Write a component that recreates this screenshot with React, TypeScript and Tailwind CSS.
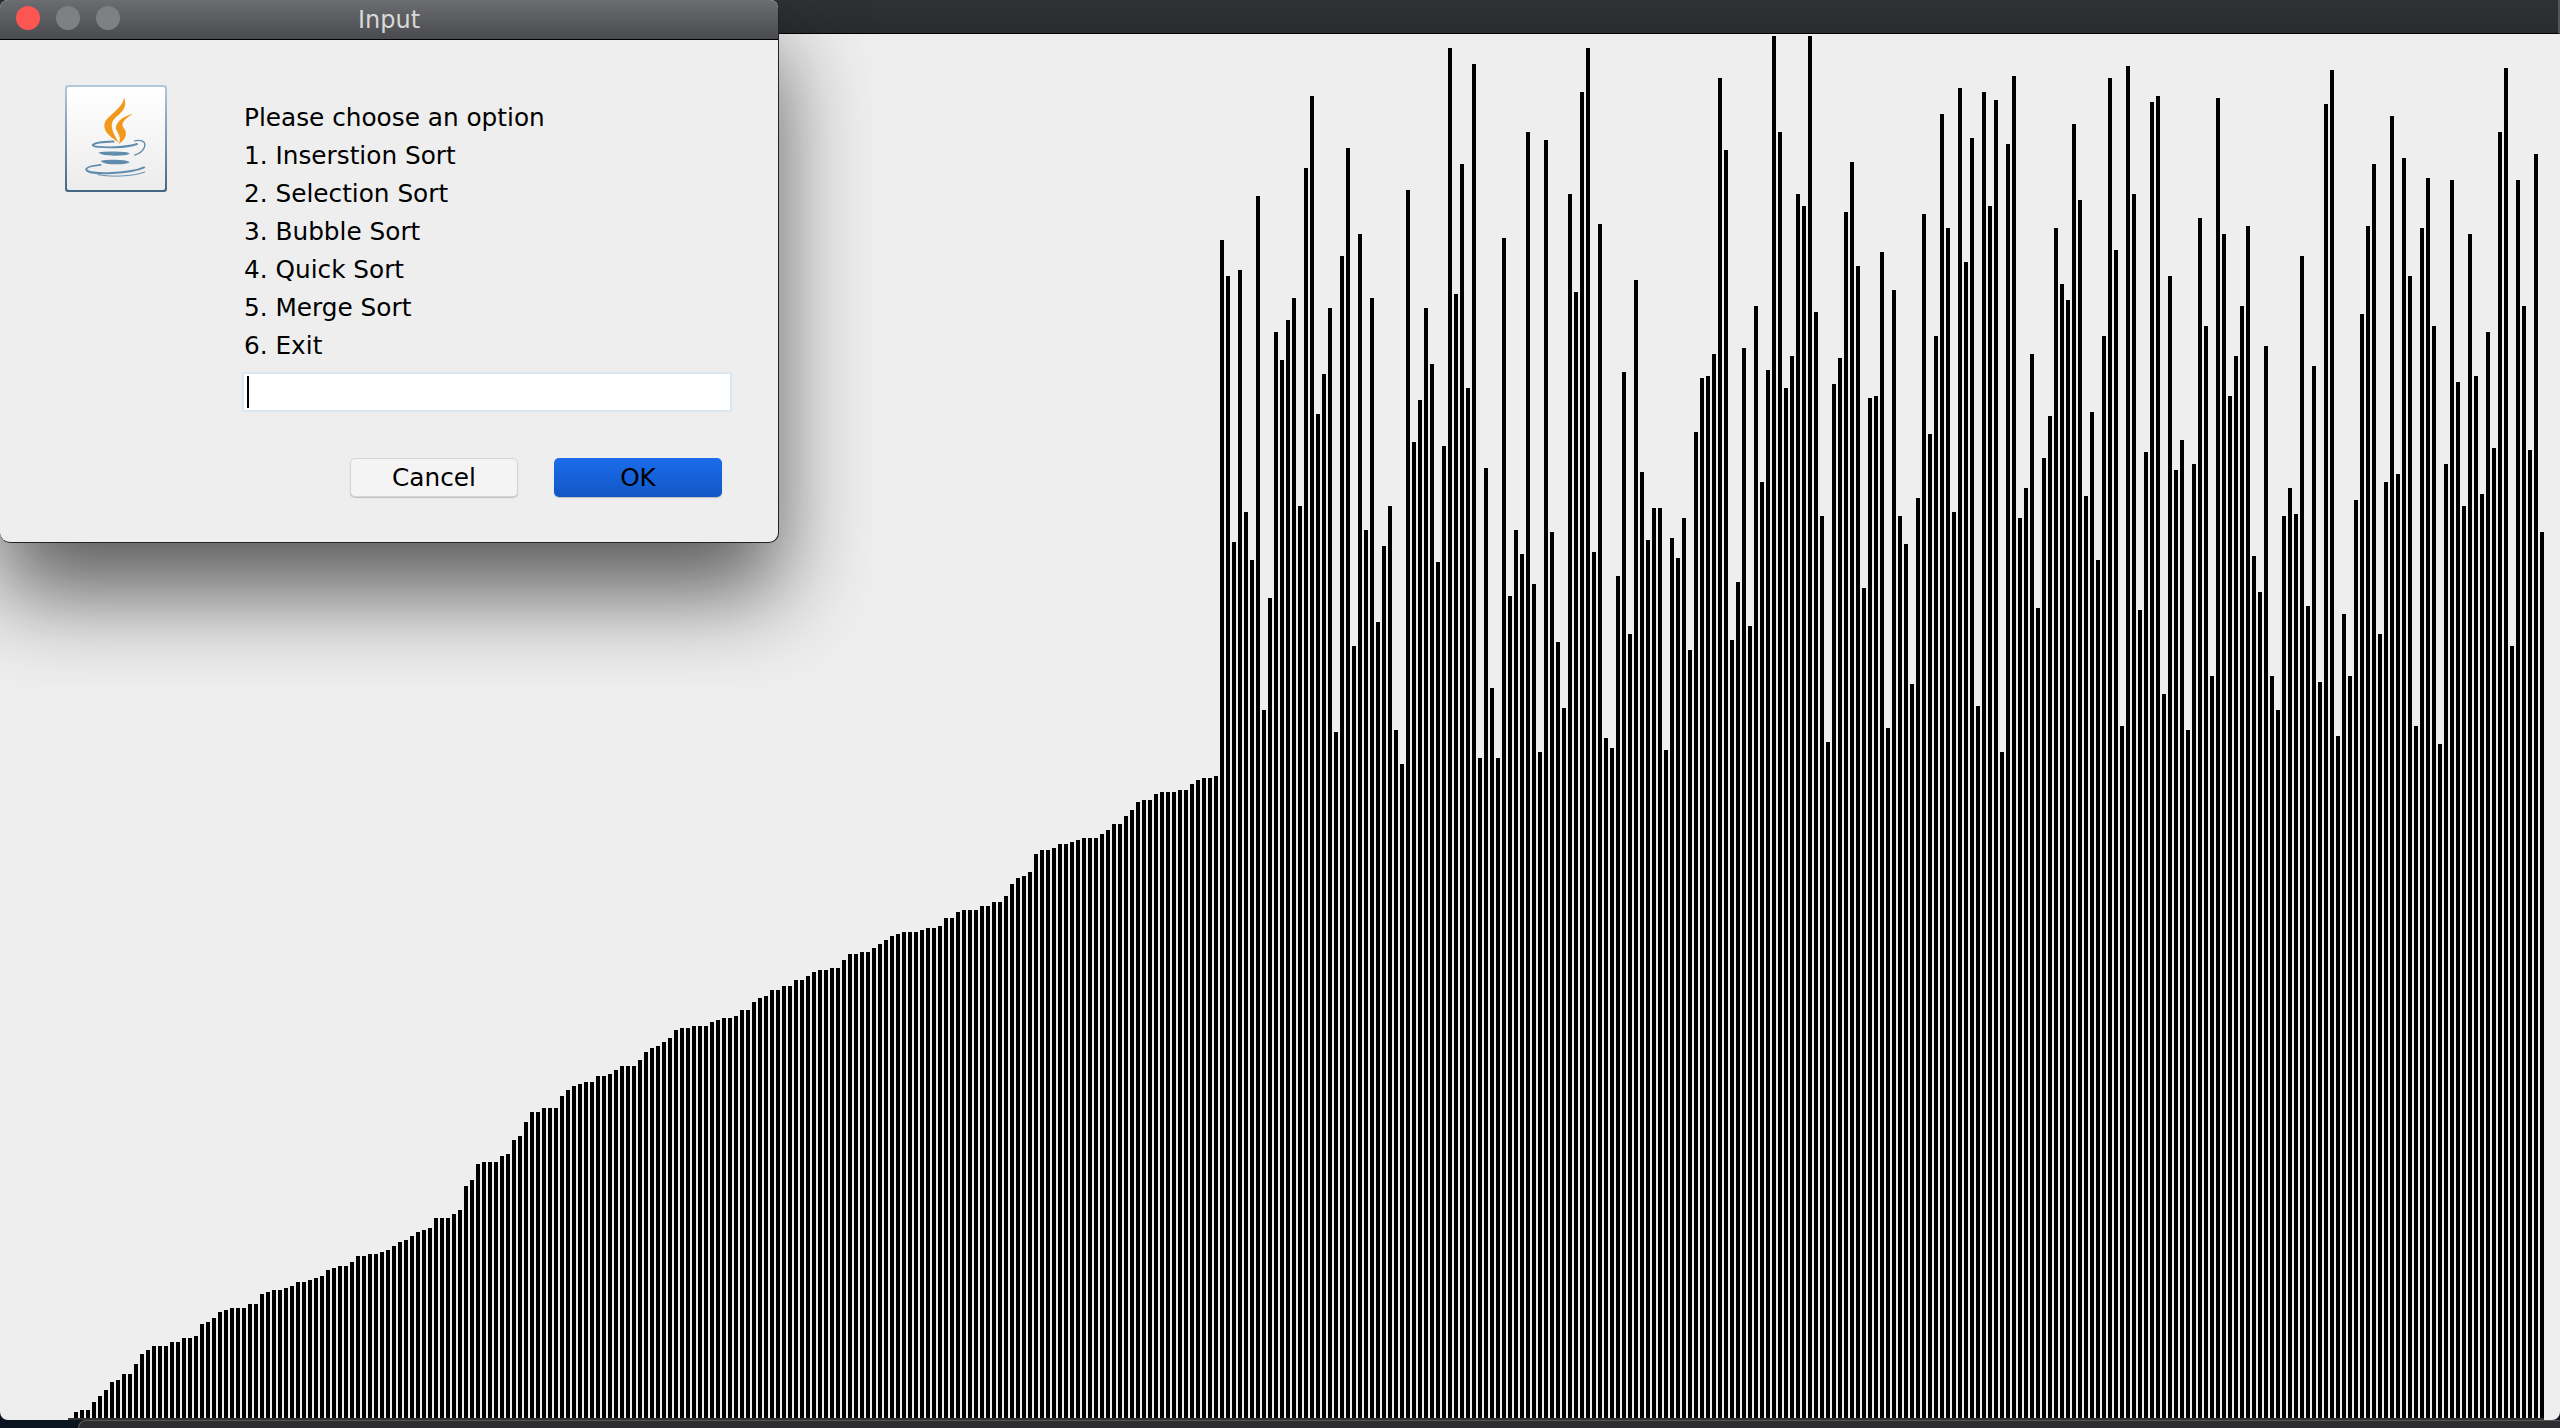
// Sorting visualiser window with the Java option dialog on top of it

// heights of the part that is already sorted
const sorted = [
  2, 8, 10, 10, 18, 24, 30, 38, 40, 46, 46, 56, 66, 70, 74, 74, 74, 78, 78, 82, 82, 84, 96, 98,
  102, 108, 110, 112, 112, 112, 116, 116, 126, 128, 130, 130, 132, 134, 138, 138, 140, 142, 144,
  150, 152, 154, 154, 158, 164, 164, 166, 166, 168, 170, 174, 178, 180, 184, 188, 190, 192, 202,
  202, 202, 206, 210, 234, 240, 256, 258, 258, 258, 264, 266, 280, 284, 298, 308, 308, 312, 312,
  312, 324, 330, 334, 336, 338, 338, 344, 344, 346, 350, 354, 354, 354, 360, 368, 372, 374, 378,
  382, 390, 392, 392, 394, 394, 394, 398, 400, 402, 402, 404, 410, 410, 418, 422, 424, 430, 430,
  434, 434, 440, 440, 444, 448, 450, 450, 452, 452, 460, 466, 466, 468, 468, 472, 476, 480, 484,
  486, 488, 488, 488, 490, 492, 492, 494, 502, 502, 508, 510, 510, 510, 514, 514, 518, 518, 524,
  536, 542, 544, 548, 566, 570, 570, 572, 576, 576, 578, 580, 582, 582, 582, 586, 590, 596, 596,
  604, 610, 618, 620, 620, 626, 628, 628, 628, 630, 630, 636, 640, 642, 642, 644,
];

// top of each unsorted bar, measured on a crop scaled 2.09x from y=30
const unsortedTops = [
  439, 514, 1070, 502, 1008, 1108, 347, 1422, 1187, 631, 690, 606, 560, 995, 289, 138, 803, 719,
  581, 1468, 472, 247, 1288, 426, 1045, 560, 1238, 1079, 995, 1463, 1535, 335, 861, 774, 581, 698,
  1112, 870, 38, 552, 280, 748, 71, 1522, 916, 1376, 1522, 435, 1183, 1045, 1096, 213, 1158, 1509,
  230, 1050,
  1279, 1417, 343, 548, 130, 38, 1091, 406, 1480, 1501, 1142, 715, 1263, 523, 924, 1066, 999, 999,
  1505, 1062, 1104, 1020, 1296, 840, 728, 723, 677, 100, 251, 1275, 1154, 665, 1246, 577, 945, 711,
  13, 213, 748, 682, 343, 368, 13, 590, 1016, 1489, 740, 686, 381, 276, 493, 1167, 769, 765, 464,
  1459,
  544, 1016, 1075, 1367, 978, 385, 845, 640, 176, 414, 1008, 121, 485, 226, 1413, 130, 368, 146,
  1509, 238, 96, 1020, 958, 677, 1208, 895, 807, 414, 531, 564, 197, 355, 974, 799, 1108, 640, 100,
  460, 1455, 75, 343, 1213, 882, 151, 138, 1388, 514, 920, 857, 1463, 907, 393, 619, 1351, 142, 426,
  765, 682, 577, 410, 1100, 1175, 661, 1351, 1422, 1016, 958, 1012, 472, 1204, 702, 1363, 155, 84,
  1476, 1221, 1351, 983, 594, 410, 280, 1263, 945, 180, 928, 268, 514, 1455, 414, 309, 619, 1493,
  907, 314, 736, 995, 426, 723, 970, 631, 874, 213, 79, 1288, 314, 577, 878, 259, 1050,
];

const bars = [...sorted, ...unsortedTops.map((t) => Math.round(1390 - t / 2.0907))];

const options = [
  'Please choose an option',
  '1. Inserstion Sort',
  '2. Selection Sort',
  '3. Bubble Sort',
  '4. Quick Sort',
  '5. Merge Sort',
  '6. Exit',
];

function JavaIcon() {
  return (
    <div className="w-[102px] h-[107px] rounded-[3px] p-[2px] bg-gradient-to-b from-[#b4c8dc] to-[#456783]">
      <div className="w-full h-full rounded-[2px] bg-gradient-to-b from-white to-[#ececec]">
        <svg viewBox="197 256 301 316" className="w-full h-full">
          <path
            d="M372 288C386 322 358 338 342 354C326 372 338 397 356 426C336 412 308 396 312 370C316 344 368 325 372 288Z"
            fill="#f2991c"
          />
          <path
            d="M401 337C375 344 352 358 347 378C345 392 368 405 356 431C380 414 384 396 370 380C360 365 380 350 401 337Z"
            fill="#f2991c"
          />
          <g fill="none" stroke="#5f8cac" strokeLinecap="round">
            <path d="M340 423C310 424 280 428 276 434C276 439 300 442 345 441C370 440 395 437 412 431" strokeWidth="6" />
            <path d="M405 421C425 417 438 423 436 436C434 450 420 460 405 465" strokeWidth="4" />
            <path d="M298 458C310 455 375 455 386 460C376 466 310 467 298 458Z" strokeWidth="4" fill="#5f8cac" />
            <path d="M306 484C318 481 372 481 384 487C372 492 318 493 306 484Z" strokeWidth="5" fill="#5f8cac" />
            <path d="M300 495C272 498 256 503 256 509C258 518 290 522 335 520C380 518 415 512 434 503" strokeWidth="6" />
            <path d="M292 525C330 533 400 531 436 517" strokeWidth="3" />
          </g>
        </svg>
      </div>
    </div>
  );
}

function OptionDialog() {
  return (
    <div className="absolute left-0 top-0 w-[779px] h-[543px] flex flex-col rounded-t-lg rounded-b-[10px] bg-[#eeeeee] border-r border-b border-[#222222] shadow-[0_50px_90px_rgba(0,0,0,0.62)] font-['DejaVu_Sans',sans-serif] text-[24.75px] text-black">
      <div className="relative h-[40px] shrink-0 flex items-center justify-center rounded-t-lg bg-gradient-to-b from-[#6c6d70] to-[#4a4b4e] border-b border-black">
        <div className="absolute left-[16px] top-[6px] flex gap-[16px]">
          <span className="w-[24px] h-[24px] rounded-full bg-[#fc5652]" />
          <span className="w-[24px] h-[24px] rounded-full bg-[#7f8082]" />
          <span className="w-[24px] h-[24px] rounded-full bg-[#7f8082]" />
        </div>
        <span className="text-[#d8d8d8] text-[24px] leading-none">Input</span>
      </div>
      <div className="flex pl-[65px] pt-[45px]">
        <JavaIcon />
        <div className="ml-[75px] w-[490px] pt-[14px]">
          {options.map((line) => (
            <div key={line} className="h-[38px] leading-[38px] pl-[2px] whitespace-nowrap">
              {line}
            </div>
          ))}
          <div className="mt-[7px] h-[40px] p-[2px] rounded-[2px] bg-[#d8e6f1]">
            <div className="h-full bg-white pl-[3px] py-[2px]">
              <div className="w-[2px] h-full bg-black" />
            </div>
          </div>
          <div className="mt-[46px] flex justify-end gap-[36px] pr-[10px]">
            <button className="w-[168px] h-[39px] rounded-[5px] bg-[#f4f4f4] border border-[#d4d4d4] shadow-[0_1px_1px_rgba(0,0,0,0.2)]">
              Cancel
            </button>
            <button className="w-[168px] h-[39px] rounded-[5px] bg-gradient-to-b from-[#1c6cec] to-[#1256c6] shadow-[0_1px_1px_rgba(0,0,0,0.2)]">
              OK
            </button>
          </div>
        </div>
      </div>
    </div>
  );
}

export default function App() {
  return (
    <div className="relative w-[2560px] h-[1428px] overflow-hidden bg-[#0b1521]">
      <div className="h-[1420px] flex flex-col rounded-b-lg bg-[#eeeeee] overflow-hidden">
        <div className="h-[34px] shrink-0 bg-gradient-to-b from-[#303134] to-[#2a2b2d] border-b border-black border-r-2 border-r-[#555555]" />
        <div className="flex-1 flex items-end gap-[2px] pl-[68px]">
          {bars.map((h, i) => (
            <div key={i} className="w-[4px] shrink-0 bg-black" style={{ height: h - 2 }} />
          ))}
        </div>
        <div className="h-[2px] shrink-0 ml-[68px] mr-[16px] bg-[#333333]" />
      </div>
      <div className="h-[8px] ml-[78px] rounded-tl-lg bg-[#2d2d30] border-t border-l border-[#5a5a5c]" />
      <OptionDialog />
    </div>
  );
}
